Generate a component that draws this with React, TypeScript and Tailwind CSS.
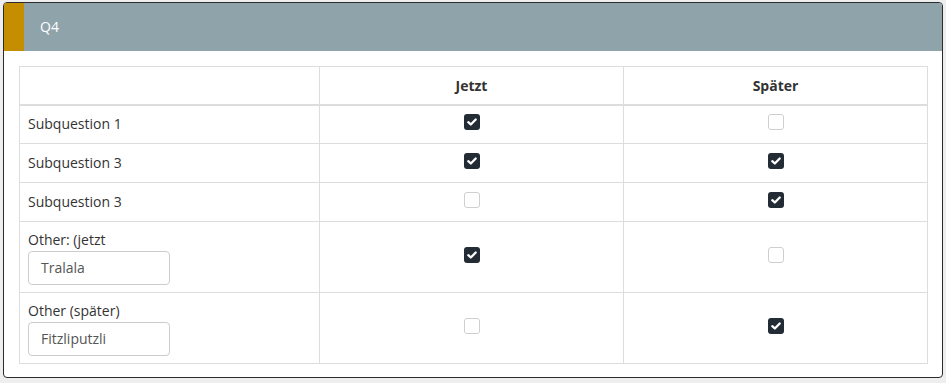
import React from "react";

type Row = { label: string; other?: string; now: boolean; later: boolean };

const rows: Row[] = [
  { label: "Subquestion 1", now: true, later: false },
  { label: "Subquestion 3", now: true, later: true },
  { label: "Subquestion 3", now: false, later: true },
  { label: "Other: (jetzt", other: "Tralala", now: true, later: false },
  { label: "Other (später)", other: "Fitzliputzli", now: false, later: true },
];

function Box({ checked }: { checked: boolean }) {
  if (!checked) {
    return (
      <span className="inline-block h-[16px] w-[16px] rounded-[3px] border border-[#cfcfcf] bg-white align-middle" />
    );
  }
  return (
    <span className="inline-flex h-[16px] w-[16px] items-center justify-center rounded-[3px] bg-[#232c35] align-middle">
      <svg width="10" height="8" viewBox="0 0 10 8">
        <path d="M1.3 4.2 L3.8 6.5 L8.7 1.5" fill="none" stroke="#fff" strokeWidth="2.3" strokeLinecap="round" strokeLinejoin="round" />
      </svg>
    </span>
  );
}

export default function App() {
  return (
    <div
      className="h-[383px] w-[946px] bg-[#eeeeee] pl-[3px] pt-[2px] text-[#333]"
      style={{ fontFamily: '"Open Sans", "Liberation Sans", sans-serif' }}
    >
      <div className="h-[376px] w-[940px] overflow-hidden rounded-[4px] border border-[#2b2b2b] bg-white">
        <div className="flex h-[48px] bg-[#8fa3ab]">
          <div className="w-[20px] bg-[#c48e00]" />
          <div className="flex items-center pb-[1px] pl-[16px] text-[14px] text-white">Q4</div>
        </div>
        <div className="p-[15px]">
          <table className="w-[908px] table-fixed border-collapse text-[14px]">
            <colgroup>
              <col className="w-[300px]" />
              <col className="w-[304px]" />
              <col className="w-[304px]" />
            </colgroup>
            <thead>
              <tr className="h-[38px]">
                <th className="border border-b-2 border-[#dddddd]" />
                <th className="border border-b-2 border-[#dddddd] text-center font-bold">Jetzt</th>
                <th className="border border-b-2 border-[#dddddd] text-center font-bold">Später</th>
              </tr>
            </thead>
            <tbody>
              {rows.map((r, i) => (
                <tr key={i} className={r.other ? "h-[71px]" : "h-[39px]"}>
                  <td className="border border-[#dddddd] px-[8px] align-middle leading-[20px]">
                    {r.other ? (
                      <div className="flex flex-col pt-[1px]">
                        <span className="leading-[20px]">{r.label}</span>
                        <div className="mt-[1px] flex h-[34px] w-[142px] items-center rounded-[4px] border border-[#cccccc] px-[12px] text-[#555]">
                          {r.other}
                        </div>
                      </div>
                    ) : (
                      r.label
                    )}
                  </td>
                  <td className="border border-[#dddddd] pb-[5px] text-center align-middle leading-none">
                    <Box checked={r.now} />
                  </td>
                  <td className="border border-[#dddddd] pb-[5px] text-center align-middle leading-none">
                    <Box checked={r.later} />
                  </td>
                </tr>
              ))}
            </tbody>
          </table>
        </div>
      </div>
    </div>
  );
}
